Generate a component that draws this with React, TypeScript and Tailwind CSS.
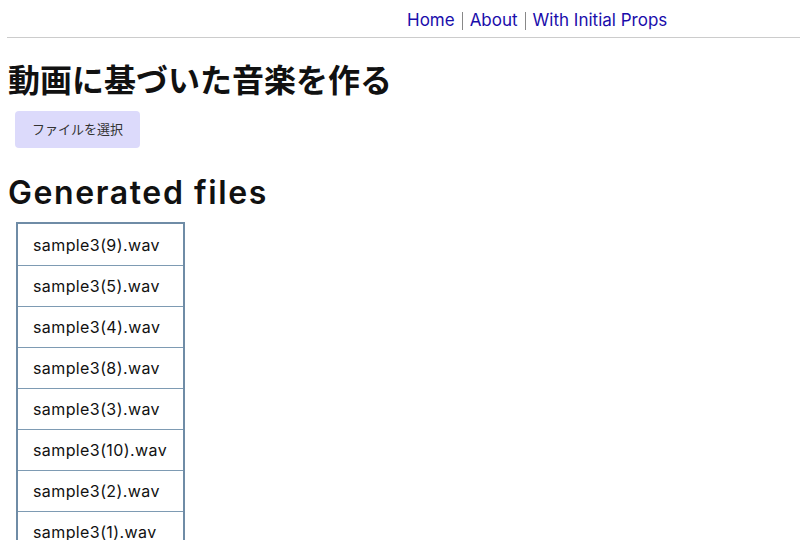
import React from "react";

const FILES = [
  "sample3(9).wav",
  "sample3(5).wav",
  "sample3(4).wav",
  "sample3(8).wav",
  "sample3(3).wav",
  "sample3(10).wav",
  "sample3(2).wav",
  "sample3(1).wav",
];

const LINKS = ["Home", "About", "With Initial Props"];

export default function App() {
  return (
    <div
      className="min-h-[540px] bg-white text-[#111] overflow-hidden"
      style={{ fontFamily: 'Inter, "Noto Sans CJK JP", sans-serif' }}
    >
      <nav className="ml-[7px] flex h-[38px] items-center justify-start border-b border-[#cccccc] pl-[400px] pt-[4px]">
        {LINKS.map((l, i) => (
          <React.Fragment key={l}>
            {i > 0 && <span className="mx-[7px] h-[18px] w-px bg-[#888]" />}
            <a className="text-[17px] leading-none text-[#1a0dab]" href="#">
              {l}
            </a>
          </React.Fragment>
        ))}
      </nav>

      <main className="px-[8px]">
        <h1 className="mt-[23px] text-[32px] font-bold leading-[40px]">
          動画に基づいた音楽を作る
        </h1>
        <div className="mt-[10px] pl-[7px]">
          <button className="h-[37px] w-[125px] rounded-[4px] bg-[#dcdafb] text-[13px] text-[#333]">
            ファイルを選択
          </button>
        </div>

        <h2 className="mt-[25px] text-[32px] font-semibold leading-[40px] tracking-[1.6px]">
          Generated files
        </h2>

        <ul className="ml-[8px] mt-[9px] w-[169px] border-2 border-b-0 border-[#6f8ca6]">
          {FILES.map((f, i) => (
            <li
              key={f}
              className={`flex h-[41px] items-center pl-[15px] text-[16px] tracking-[0.4px] ${
                i > 0 ? "border-t border-[#7e9bb3]" : ""
              }`}
            >
              {f}
            </li>
          ))}
        </ul>
      </main>
    </div>
  );
}
